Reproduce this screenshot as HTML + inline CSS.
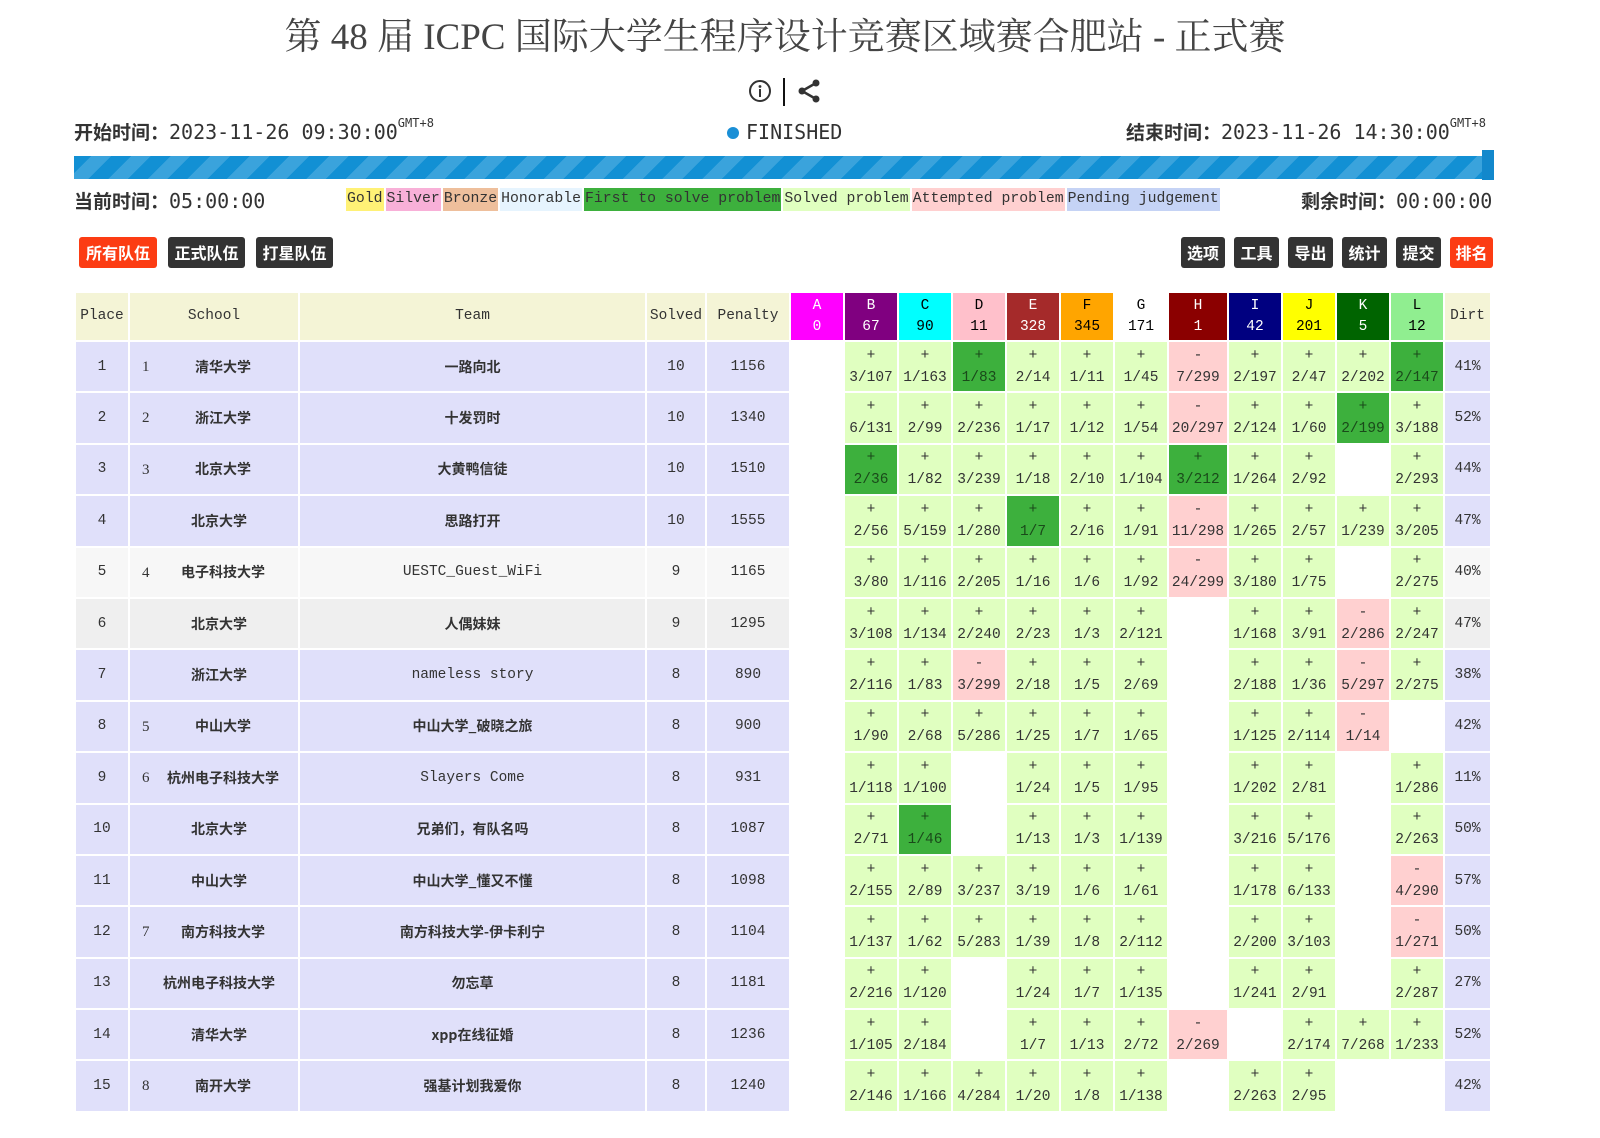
<!DOCTYPE html>
<html><head><meta charset="utf-8">
<style>
body{margin:0;background:#fff;width:1600px;height:1138px;overflow:hidden;position:relative;font-family:"Liberation Mono","Noto Sans CJK SC",monospace;color:#333}
.abs{position:absolute}
.title{left:0;width:1570px;top:13px;text-align:center;font-family:"Liberation Serif","Noto Serif CJK SC",serif;font-size:37px;color:#444;line-height:50px}
.t{font-family:"DejaVu Sans Mono","Noto Sans CJK SC",monospace;font-size:20px;color:#333;white-space:nowrap}
.t b{font-family:"Noto Sans CJK SC",sans-serif;font-weight:700;font-size:19px}
.t sup{font-size:12px;position:relative;top:-4px}
.bar{left:74px;top:156px;width:1420px;height:23px;background:repeating-linear-gradient(-45deg,#1290d4 0 14px,#3aa3dc 14px 28px);}
.handle{left:1482px;top:150px;width:12px;height:30px;background:#1288cc}
.legend{left:346px;top:188px;height:23px;display:flex;font-size:14.8px;line-height:23px;white-space:nowrap}
.legend span{display:block;padding:0 1px;margin-right:2px}
.btn{top:237px;height:31px;line-height:31px;color:#fff;font-family:"Noto Sans CJK SC",sans-serif;font-weight:700;font-size:16px;text-align:center;border-radius:3px;background:#333}
.red{background:#fc3c13}
table{position:absolute;left:74px;top:291px;border-collapse:separate;border-spacing:2px;table-layout:fixed;font-size:14.5px}
td,th{padding:0;text-align:center;font-weight:normal;overflow:hidden;white-space:nowrap}
th{background:#f4f4d6;height:47px;line-height:21px}
tr.r td{height:49.4px;background:#e0e0fa;line-height:22px}
tr.g1 td{background:#f7f7f7}
tr.g2 td{background:#efefef}
tr.r td.s{background:#e0ffc0}
tr.r td.f{background:#3db03d;color:#1a4a1a}
tr.r td.a{background:#ffd0d0}
tr.r td.e{background:#fff}
td.sc{position:relative;font-family:"Noto Sans CJK SC",sans-serif;font-weight:700;font-size:14px;padding-left:10px}
td.sc.k{padding-left:18px}
td.sc i{position:absolute;left:12px;top:14px;font-style:normal;font-family:"Liberation Serif",serif;font-weight:normal;font-size:15px}
td.tm{font-family:"Liberation Mono","Noto Sans CJK SC",monospace;font-size:14.5px}
td.tm.cn{font-family:"Noto Sans CJK SC",sans-serif;font-size:14px;font-weight:700}
</style></head><body>
<div class="abs title">第 48 届 ICPC 国际大学生程序设计竞赛区域赛合肥站 - 正式赛</div>
<svg class="abs" style="left:748px;top:78px" width="76" height="28" viewBox="0 0 76 28">
<circle cx="12" cy="13" r="10" fill="none" stroke="#333" stroke-width="2"/>
<circle cx="12" cy="8.5" r="1.4" fill="#333"/><rect x="11" y="11" width="2" height="8" fill="#333"/>
<rect x="35" y="0" width="2" height="28" fill="#111"/>
<circle cx="68" cy="5" r="3.5" fill="#333"/><circle cx="54" cy="13" r="3.5" fill="#333"/><circle cx="68" cy="21" r="3.5" fill="#333"/>
<path d="M68 5 L54 13 L68 21" fill="none" stroke="#333" stroke-width="2.5"/>
</svg>
<div class="abs t" style="left:74px;top:118px"><b>开始时间：</b>2023-11-26 09:30:00<sup>GMT+8</sup></div>
<div class="abs t" style="left:727px;top:120px"><span style="display:inline-block;width:12px;height:12px;border-radius:6px;background:#1a8fd6;margin-right:7px"></span>FINISHED</div>
<div class="abs t" style="left:1126px;top:118px"><b>结束时间：</b>2023-11-26 14:30:00<sup>GMT+8</sup></div>
<div class="abs bar"></div><div class="abs handle"></div>
<div class="abs t" style="left:74px;top:187px"><b>当前时间：</b>05:00:00</div>
<div class="abs t" style="left:1301px;top:187px"><b>剩余时间：</b>00:00:00</div>
<div class="abs legend">
<span style="background:#fff176">Gold</span><span style="background:#f8b0d8">Silver</span><span style="background:#eebf9c">Bronze</span><span style="background:#e6f4fe">Honorable</span><span style="background:#3db03d">First to solve problem</span><span style="background:#e0ffc0">Solved problem</span><span style="background:#ffd0d0">Attempted problem</span><span style="background:#c5d3f5">Pending judgement</span>
</div>
<div class="abs btn red" style="left:79px;width:78px">所有队伍</div>
<div class="abs btn" style="left:168px;width:77px">正式队伍</div>
<div class="abs btn" style="left:256px;width:77px">打星队伍</div>
<div class="abs btn" style="left:1181px;width:44px">选项</div>
<div class="abs btn" style="left:1234px;width:45px">工具</div>
<div class="abs btn" style="left:1288px;width:45px">导出</div>
<div class="abs btn" style="left:1342px;width:45px">统计</div>
<div class="abs btn" style="left:1396px;width:45px">提交</div>
<div class="abs btn red" style="left:1450px;width:43px">排名</div>

<table>
<colgroup><col style="width:52px"><col style="width:168px"><col style="width:345px"><col style="width:58px"><col style="width:82px"><col style="width:52px"><col style="width:52px"><col style="width:52px"><col style="width:52px"><col style="width:52px"><col style="width:52px"><col style="width:52px"><col style="width:58px"><col style="width:52px"><col style="width:52px"><col style="width:52px"><col style="width:52px"><col style="width:45px"></colgroup>
<tr><th>Place</th><th>School</th><th>Team</th><th>Solved</th><th>Penalty</th>
<th style="background:#ff00ff;color:#fff">A<br>0</th><th style="background:#800080;color:#fff">B<br>67</th><th style="background:#00ffff;color:#000">C<br>90</th><th style="background:#ffc0cb;color:#000">D<br>11</th><th style="background:#a52a2a;color:#fff">E<br>328</th><th style="background:#ffa500;color:#000">F<br>345</th><th style="background:#fff;color:#000">G<br>171</th><th style="background:#8b0000;color:#fff">H<br>1</th><th style="background:#000080;color:#fff">I<br>42</th><th style="background:#ffff00;color:#000">J<br>201</th><th style="background:#006400;color:#fff">K<br>5</th><th style="background:#90ee90;color:#000">L<br>12</th><th>Dirt</th></tr>

<tr class="r"><td>1</td><td class="sc k"><i>1</i>清华大学</td><td class="tm cn">一路向北</td><td>10</td><td>1156</td><td class="e"></td><td class="s">+<br>3/107</td><td class="s">+<br>1/163</td><td class="f">+<br>1/83</td><td class="s">+<br>2/14</td><td class="s">+<br>1/11</td><td class="s">+<br>1/45</td><td class="a">-<br>7/299</td><td class="s">+<br>2/197</td><td class="s">+<br>2/47</td><td class="s">+<br>2/202</td><td class="f">+<br>2/147</td><td>41%</td></tr>
<tr class="r"><td>2</td><td class="sc k"><i>2</i>浙江大学</td><td class="tm cn">十发罚时</td><td>10</td><td>1340</td><td class="e"></td><td class="s">+<br>6/131</td><td class="s">+<br>2/99</td><td class="s">+<br>2/236</td><td class="s">+<br>1/17</td><td class="s">+<br>1/12</td><td class="s">+<br>1/54</td><td class="a">-<br>20/297</td><td class="s">+<br>2/124</td><td class="s">+<br>1/60</td><td class="f">+<br>2/199</td><td class="s">+<br>3/188</td><td>52%</td></tr>
<tr class="r"><td>3</td><td class="sc k"><i>3</i>北京大学</td><td class="tm cn">大黄鸭信徒</td><td>10</td><td>1510</td><td class="e"></td><td class="f">+<br>2/36</td><td class="s">+<br>1/82</td><td class="s">+<br>3/239</td><td class="s">+<br>1/18</td><td class="s">+<br>2/10</td><td class="s">+<br>1/104</td><td class="f">+<br>3/212</td><td class="s">+<br>1/264</td><td class="s">+<br>2/92</td><td class="e"></td><td class="s">+<br>2/293</td><td>44%</td></tr>
<tr class="r"><td>4</td><td class="sc">北京大学</td><td class="tm cn">思路打开</td><td>10</td><td>1555</td><td class="e"></td><td class="s">+<br>2/56</td><td class="s">+<br>5/159</td><td class="s">+<br>1/280</td><td class="f">+<br>1/7</td><td class="s">+<br>2/16</td><td class="s">+<br>1/91</td><td class="a">-<br>11/298</td><td class="s">+<br>1/265</td><td class="s">+<br>2/57</td><td class="s">+<br>1/239</td><td class="s">+<br>3/205</td><td>47%</td></tr>
<tr class="r g1"><td>5</td><td class="sc k"><i>4</i>电子科技大学</td><td class="tm">UESTC_Guest_WiFi</td><td>9</td><td>1165</td><td class="e"></td><td class="s">+<br>3/80</td><td class="s">+<br>1/116</td><td class="s">+<br>2/205</td><td class="s">+<br>1/16</td><td class="s">+<br>1/6</td><td class="s">+<br>1/92</td><td class="a">-<br>24/299</td><td class="s">+<br>3/180</td><td class="s">+<br>1/75</td><td class="e"></td><td class="s">+<br>2/275</td><td>40%</td></tr>
<tr class="r g2"><td>6</td><td class="sc">北京大学</td><td class="tm cn">人偶妹妹</td><td>9</td><td>1295</td><td class="e"></td><td class="s">+<br>3/108</td><td class="s">+<br>1/134</td><td class="s">+<br>2/240</td><td class="s">+<br>2/23</td><td class="s">+<br>1/3</td><td class="s">+<br>2/121</td><td class="e"></td><td class="s">+<br>1/168</td><td class="s">+<br>3/91</td><td class="a">-<br>2/286</td><td class="s">+<br>2/247</td><td>47%</td></tr>
<tr class="r"><td>7</td><td class="sc">浙江大学</td><td class="tm">nameless story</td><td>8</td><td>890</td><td class="e"></td><td class="s">+<br>2/116</td><td class="s">+<br>1/83</td><td class="a">-<br>3/299</td><td class="s">+<br>2/18</td><td class="s">+<br>1/5</td><td class="s">+<br>2/69</td><td class="e"></td><td class="s">+<br>2/188</td><td class="s">+<br>1/36</td><td class="a">-<br>5/297</td><td class="s">+<br>2/275</td><td>38%</td></tr>
<tr class="r"><td>8</td><td class="sc k"><i>5</i>中山大学</td><td class="tm cn">中山大学_破晓之旅</td><td>8</td><td>900</td><td class="e"></td><td class="s">+<br>1/90</td><td class="s">+<br>2/68</td><td class="s">+<br>5/286</td><td class="s">+<br>1/25</td><td class="s">+<br>1/7</td><td class="s">+<br>1/65</td><td class="e"></td><td class="s">+<br>1/125</td><td class="s">+<br>2/114</td><td class="a">-<br>1/14</td><td class="e"></td><td>42%</td></tr>
<tr class="r"><td>9</td><td class="sc k"><i>6</i>杭州电子科技大学</td><td class="tm">Slayers Come</td><td>8</td><td>931</td><td class="e"></td><td class="s">+<br>1/118</td><td class="s">+<br>1/100</td><td class="e"></td><td class="s">+<br>1/24</td><td class="s">+<br>1/5</td><td class="s">+<br>1/95</td><td class="e"></td><td class="s">+<br>1/202</td><td class="s">+<br>2/81</td><td class="e"></td><td class="s">+<br>1/286</td><td>11%</td></tr>
<tr class="r"><td>10</td><td class="sc">北京大学</td><td class="tm cn">兄弟们，有队名吗</td><td>8</td><td>1087</td><td class="e"></td><td class="s">+<br>2/71</td><td class="f">+<br>1/46</td><td class="e"></td><td class="s">+<br>1/13</td><td class="s">+<br>1/3</td><td class="s">+<br>1/139</td><td class="e"></td><td class="s">+<br>3/216</td><td class="s">+<br>5/176</td><td class="e"></td><td class="s">+<br>2/263</td><td>50%</td></tr>
<tr class="r"><td>11</td><td class="sc">中山大学</td><td class="tm cn">中山大学_懂又不懂</td><td>8</td><td>1098</td><td class="e"></td><td class="s">+<br>2/155</td><td class="s">+<br>2/89</td><td class="s">+<br>3/237</td><td class="s">+<br>3/19</td><td class="s">+<br>1/6</td><td class="s">+<br>1/61</td><td class="e"></td><td class="s">+<br>1/178</td><td class="s">+<br>6/133</td><td class="e"></td><td class="a">-<br>4/290</td><td>57%</td></tr>
<tr class="r"><td>12</td><td class="sc k"><i>7</i>南方科技大学</td><td class="tm cn">南方科技大学-伊卡利宁</td><td>8</td><td>1104</td><td class="e"></td><td class="s">+<br>1/137</td><td class="s">+<br>1/62</td><td class="s">+<br>5/283</td><td class="s">+<br>1/39</td><td class="s">+<br>1/8</td><td class="s">+<br>2/112</td><td class="e"></td><td class="s">+<br>2/200</td><td class="s">+<br>3/103</td><td class="e"></td><td class="a">-<br>1/271</td><td>50%</td></tr>
<tr class="r"><td>13</td><td class="sc">杭州电子科技大学</td><td class="tm cn">勿忘草</td><td>8</td><td>1181</td><td class="e"></td><td class="s">+<br>2/216</td><td class="s">+<br>1/120</td><td class="e"></td><td class="s">+<br>1/24</td><td class="s">+<br>1/7</td><td class="s">+<br>1/135</td><td class="e"></td><td class="s">+<br>1/241</td><td class="s">+<br>2/91</td><td class="e"></td><td class="s">+<br>2/287</td><td>27%</td></tr>
<tr class="r"><td>14</td><td class="sc">清华大学</td><td class="tm cn">xpp在线征婚</td><td>8</td><td>1236</td><td class="e"></td><td class="s">+<br>1/105</td><td class="s">+<br>2/184</td><td class="e"></td><td class="s">+<br>1/7</td><td class="s">+<br>1/13</td><td class="s">+<br>2/72</td><td class="a">-<br>2/269</td><td class="e"></td><td class="s">+<br>2/174</td><td class="s">+<br>7/268</td><td class="s">+<br>1/233</td><td>52%</td></tr>
<tr class="r"><td>15</td><td class="sc k"><i>8</i>南开大学</td><td class="tm cn">强基计划我爱你</td><td>8</td><td>1240</td><td class="e"></td><td class="s">+<br>2/146</td><td class="s">+<br>1/166</td><td class="s">+<br>4/284</td><td class="s">+<br>1/20</td><td class="s">+<br>1/8</td><td class="s">+<br>1/138</td><td class="e"></td><td class="s">+<br>2/263</td><td class="s">+<br>2/95</td><td class="e"></td><td class="e"></td><td>42%</td></tr>
</table>
</body></html>
